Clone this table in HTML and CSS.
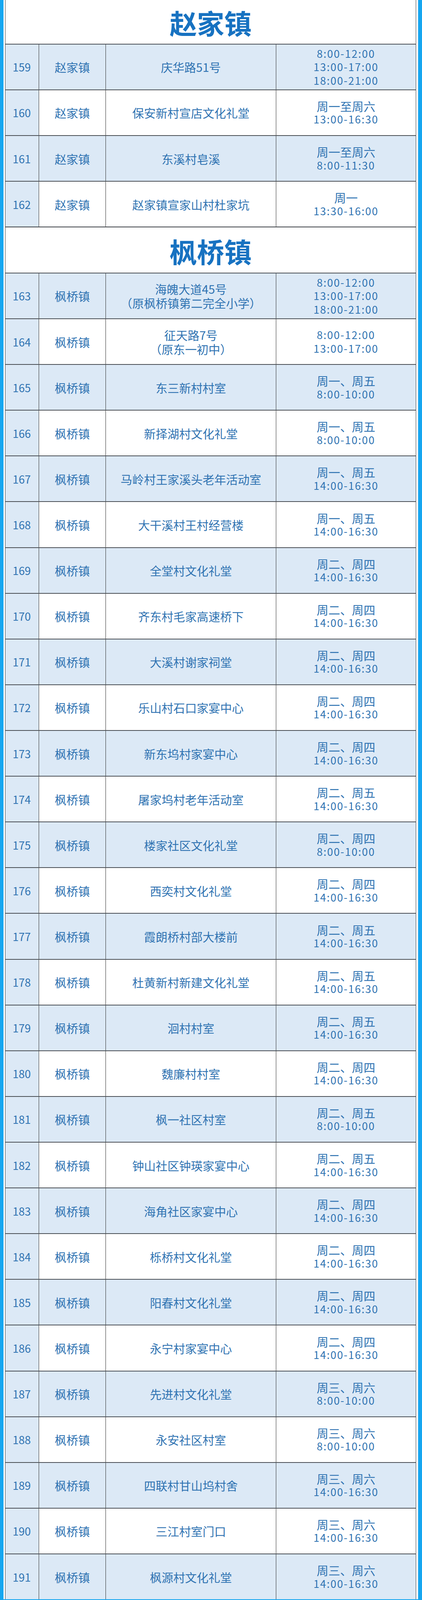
FILE: index.html
```html
<!DOCTYPE html>
<html lang="zh-CN">
<head>
<meta charset="utf-8">
<title>赵家镇 枫桥镇</title>
<link rel="stylesheet" href="styles.css">
</head>
<body>
<div class="frame">
<div class="gap">
<div class="table">
  <div class="town first">赵家镇</div>
  <div class="row alt"><div class="c no">159</div><div class="c">赵家镇</div><div class="c addr">庆华路51号</div><div class="c time"><div class="d">8:00-12:00</div><div class="d">13:00-17:00</div><div class="d">18:00-21:00</div></div></div>
  <div class="row"><div class="c no">160</div><div class="c">赵家镇</div><div class="c addr">保安新村宣店文化礼堂</div><div class="c time"><div class="w">周一至周六</div><div class="d">13:00-16:30</div></div></div>
  <div class="row alt"><div class="c no">161</div><div class="c">赵家镇</div><div class="c addr">东溪村皂溪</div><div class="c time"><div class="w">周一至周六</div><div class="d">8:00-11:30</div></div></div>
  <div class="row"><div class="c no">162</div><div class="c">赵家镇</div><div class="c addr">赵家镇宣家山村杜家坑</div><div class="c time"><div class="w">周一</div><div class="d">13:30-16:00</div></div></div>

  <div class="town">枫桥镇</div>
  <div class="row alt"><div class="c no">163</div><div class="c">枫桥镇</div><div class="c addr"><div>海魄大道45号</div><div>（原枫桥镇第二完全小学）</div></div><div class="c time"><div class="d">8:00-12:00</div><div class="d">13:00-17:00</div><div class="d">18:00-21:00</div></div></div>
  <div class="row"><div class="c no">164</div><div class="c">枫桥镇</div><div class="c addr"><div>征天路7号</div><div>（原东一初中）</div></div><div class="c time"><div class="d">8:00-12:00</div><div class="d">13:00-17:00</div></div></div>
  <div class="row alt"><div class="c no">165</div><div class="c">枫桥镇</div><div class="c addr">东三新村村室</div><div class="c time"><div class="w">周一、周五</div><div class="d">8:00-10:00</div></div></div>
  <div class="row"><div class="c no">166</div><div class="c">枫桥镇</div><div class="c addr">新择湖村文化礼堂</div><div class="c time"><div class="w">周一、周五</div><div class="d">8:00-10:00</div></div></div>
  <div class="row alt"><div class="c no">167</div><div class="c">枫桥镇</div><div class="c addr">马岭村王家溪头老年活动室</div><div class="c time"><div class="w">周一、周五</div><div class="d">14:00-16:30</div></div></div>
  <div class="row"><div class="c no">168</div><div class="c">枫桥镇</div><div class="c addr">大干溪村王村经营楼</div><div class="c time"><div class="w">周一、周五</div><div class="d">14:00-16:30</div></div></div>
  <div class="row alt"><div class="c no">169</div><div class="c">枫桥镇</div><div class="c addr">全堂村文化礼堂</div><div class="c time"><div class="w">周二、周四</div><div class="d">14:00-16:30</div></div></div>
  <div class="row"><div class="c no">170</div><div class="c">枫桥镇</div><div class="c addr">齐东村毛家高速桥下</div><div class="c time"><div class="w">周二、周四</div><div class="d">14:00-16:30</div></div></div>
  <div class="row alt"><div class="c no">171</div><div class="c">枫桥镇</div><div class="c addr">大溪村谢家祠堂</div><div class="c time"><div class="w">周二、周四</div><div class="d">14:00-16:30</div></div></div>
  <div class="row"><div class="c no">172</div><div class="c">枫桥镇</div><div class="c addr">乐山村石口家宴中心</div><div class="c time"><div class="w">周二、周四</div><div class="d">14:00-16:30</div></div></div>
  <div class="row alt"><div class="c no">173</div><div class="c">枫桥镇</div><div class="c addr">新东坞村家宴中心</div><div class="c time"><div class="w">周二、周四</div><div class="d">14:00-16:30</div></div></div>
  <div class="row"><div class="c no">174</div><div class="c">枫桥镇</div><div class="c addr">屠家坞村老年活动室</div><div class="c time"><div class="w">周二、周五</div><div class="d">14:00-16:30</div></div></div>
  <div class="row alt"><div class="c no">175</div><div class="c">枫桥镇</div><div class="c addr">楼家社区文化礼堂</div><div class="c time"><div class="w">周二、周四</div><div class="d">8:00-10:00</div></div></div>
  <div class="row"><div class="c no">176</div><div class="c">枫桥镇</div><div class="c addr">西奕村文化礼堂</div><div class="c time"><div class="w">周二、周四</div><div class="d">14:00-16:30</div></div></div>
  <div class="row alt"><div class="c no">177</div><div class="c">枫桥镇</div><div class="c addr">霞朗桥村部大楼前</div><div class="c time"><div class="w">周二、周五</div><div class="d">14:00-16:30</div></div></div>
  <div class="row"><div class="c no">178</div><div class="c">枫桥镇</div><div class="c addr">杜黄新村新建文化礼堂</div><div class="c time"><div class="w">周二、周五</div><div class="d">14:00-16:30</div></div></div>
  <div class="row alt"><div class="c no">179</div><div class="c">枫桥镇</div><div class="c addr">洄村村室</div><div class="c time"><div class="w">周二、周五</div><div class="d">14:00-16:30</div></div></div>
  <div class="row"><div class="c no">180</div><div class="c">枫桥镇</div><div class="c addr">魏廉村村室</div><div class="c time"><div class="w">周二、周四</div><div class="d">14:00-16:30</div></div></div>
  <div class="row alt"><div class="c no">181</div><div class="c">枫桥镇</div><div class="c addr">枫一社区村室</div><div class="c time"><div class="w">周二、周五</div><div class="d">8:00-10:00</div></div></div>
  <div class="row"><div class="c no">182</div><div class="c">枫桥镇</div><div class="c addr">钟山社区钟瑛家宴中心</div><div class="c time"><div class="w">周二、周五</div><div class="d">14:00-16:30</div></div></div>
  <div class="row alt"><div class="c no">183</div><div class="c">枫桥镇</div><div class="c addr">海角社区家宴中心</div><div class="c time"><div class="w">周二、周四</div><div class="d">14:00-16:30</div></div></div>
  <div class="row"><div class="c no">184</div><div class="c">枫桥镇</div><div class="c addr">栎桥村文化礼堂</div><div class="c time"><div class="w">周二、周四</div><div class="d">14:00-16:30</div></div></div>
  <div class="row alt"><div class="c no">185</div><div class="c">枫桥镇</div><div class="c addr">阳春村文化礼堂</div><div class="c time"><div class="w">周二、周四</div><div class="d">14:00-16:30</div></div></div>
  <div class="row"><div class="c no">186</div><div class="c">枫桥镇</div><div class="c addr">永宁村家宴中心</div><div class="c time"><div class="w">周二、周四</div><div class="d">14:00-16:30</div></div></div>
  <div class="row alt"><div class="c no">187</div><div class="c">枫桥镇</div><div class="c addr">先进村文化礼堂</div><div class="c time"><div class="w">周三、周六</div><div class="d">8:00-10:00</div></div></div>
  <div class="row"><div class="c no">188</div><div class="c">枫桥镇</div><div class="c addr">永安社区村室</div><div class="c time"><div class="w">周三、周六</div><div class="d">8:00-10:00</div></div></div>
  <div class="row alt"><div class="c no">189</div><div class="c">枫桥镇</div><div class="c addr">四联村甘山坞村舍</div><div class="c time"><div class="w">周三、周六</div><div class="d">14:00-16:30</div></div></div>
  <div class="row"><div class="c no">190</div><div class="c">枫桥镇</div><div class="c addr">三江村室门口</div><div class="c time"><div class="w">周三、周六</div><div class="d">14:00-16:30</div></div></div>
  <div class="row alt"><div class="c no">191</div><div class="c">枫桥镇</div><div class="c addr">枫源村文化礼堂</div><div class="c time"><div class="w">周三、周六</div><div class="d">14:00-16:30</div></div></div>
</div>
</div>
</div>
</body>
</html>
```

FILE: styles.css
```css
html, body {
  margin: 0;
  padding: 0;
  background: #16a6f0;
}
body {
  width: 1080px;
  font-family: "Noto Sans CJK SC", "Noto Sans", sans-serif;
  color: #2f73b2;
}
.frame {
  background: #16a6f0;
  padding: 0 10px 0 9px;
}
.gap {
  background: #ffffff;
  padding: 0 5px 0 4px;
}
.table {
  border-left: 1px solid #3a3a3a;
  border-right: 1px solid #3a3a3a;
  background: #ffffff;
}
/* vertical sizes are fractions of the 4872px-tall sheet, so the whole sheet fits the window */
.town {
  height: 2.8736vh;
  box-sizing: border-box;
  border-top: 2px solid #3c4146;
  display: flex;
  align-items: center;
  justify-content: center;
  padding-top: 0.14vh;
  font-size: 70px;
  font-weight: 700;
  color: #1772c1;
  line-height: 1;
}
.town.first {
  height: 2.7299vh;
  border-top: 0;
  padding-top: 0.1vh;
}
.row {
  height: 2.8592vh;
  box-sizing: border-box;
  border-top: 2px solid #4a4f55;
  display: grid;
  grid-template-columns: 85px 171px 436px 1fr;
  background: #ffffff;
}
.row.alt {
  background: #dce9f6;
}
.c {
  display: flex;
  flex-direction: column;
  align-items: center;
  justify-content: center;
  text-align: center;
  font-size: 30px;
  line-height: 0.88vh;
  border-left: 1px solid #2e2e2e;
  box-sizing: border-box;
}
.c.no {
  border-left: 0;
  background: #dce9f6;
  font-size: 28px;
  padding-right: 2px;
}
.time .w {
  font-size: 30px;
  line-height: 0.842vh;
}
.time .d {
  font-size: 27px;
  letter-spacing: 2px;
  line-height: 0.842vh;
}
```
